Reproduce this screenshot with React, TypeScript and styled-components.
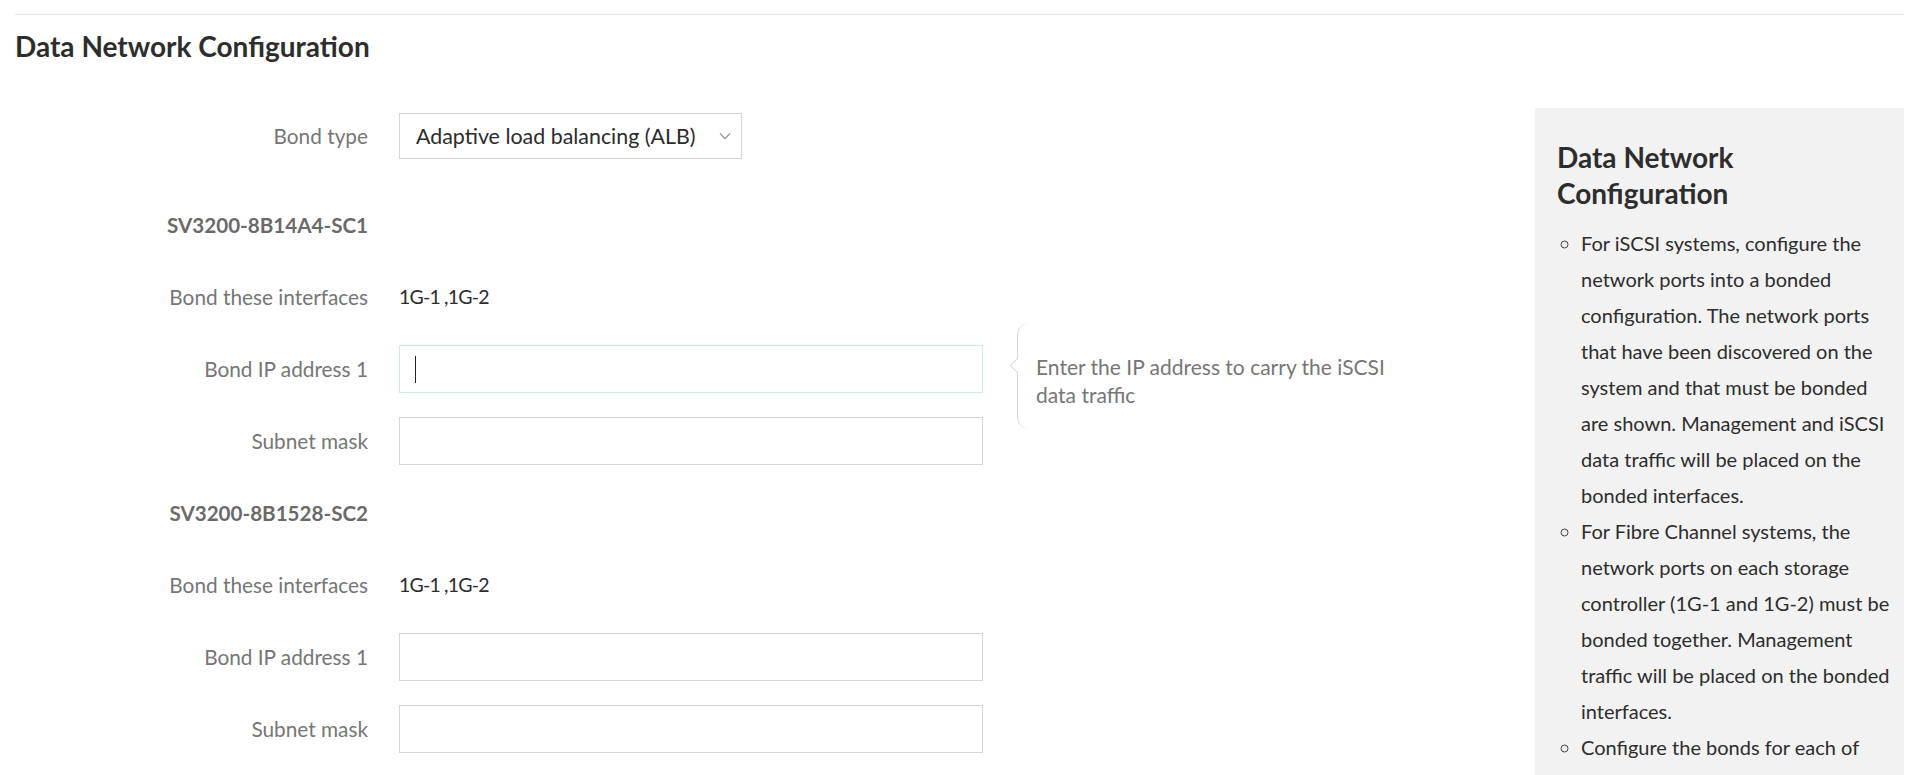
import React from "react";
import styled, { createGlobalStyle } from "styled-components";

const Global = createGlobalStyle`
  html, body { margin: 0; padding: 0; background: #ffffff; }
  body { font-family: Lato, "Noto Sans", Arial, sans-serif; color: #333333; overflow: hidden; }
  * { box-sizing: border-box; }
`;

const Page = styled.div`
  width: 1907px;
  height: 775px;
  padding: 14px 3px 0 15px;
  overflow: hidden;
`;

const Rule = styled.hr`
  margin: 0;
  border: 0;
  border-top: 1px solid #e4e4e4;
`;

const Title = styled.h2`
  margin: 14px 0 0;
  font-size: 28px;
  line-height: 34px;
  font-weight: 700;
  color: #2d2d2d;
`;

const Body = styled.div`
  display: flex;
  align-items: flex-start;
  margin-top: 45px;
`;

const Form = styled.div`
  flex: 1;
  display: grid;
  grid-template-columns: 353px 584px 1fr;
  column-gap: 31px;
  row-gap: 24px;
  padding-top: 4px;
  align-items: center;
`;

const Label = styled.div<{ $strong?: boolean }>`
  grid-column: 1;
  text-align: right;
  line-height: 48px;
  color: ${(p) => (p.$strong ? "#6a6a6a" : "#767676")};
  font-weight: ${(p) => (p.$strong ? 700 : 400)};
  font-size: ${(p) => (p.$strong ? "20.6px" : "20.8px")};
`;

const Value = styled.div`
  grid-column: 2;
  font-size: 19.5px;
  letter-spacing: -0.8px;
  line-height: 48px;
  color: #2b2b2b;
`;

const Spacer = styled.div`
  grid-column: 2 / span 2;
  height: 48px;
`;

const SelectBox = styled.div`
  grid-column: 2;
  justify-self: start;
  width: 343px;
  height: 46px;
  margin-bottom: 17px;
  border: 1px solid #d4d4d4;
  display: flex;
  align-items: center;
  justify-content: space-between;
  padding: 0 10px 0 16px;
  font-size: 21.4px;
  color: #2b2b2b;
  background: #fff;
  white-space: nowrap;
`;

const SelectLabelCell = styled(Label)`
  margin-bottom: 17px;
`;

const FieldWrap = styled.div`
  grid-column: 2;
  position: relative;
  height: 48px;
`;

const TextInput = styled.input<{ $focused?: boolean }>`
  width: 100%;
  height: 100%;
  border: 1px solid ${(p) => (p.$focused ? "#c9eee5" : "#d4d4d4")};
  background: #fff;
  outline: none;
  padding: 0 16px;
  font-family: inherit;
  font-size: 18px;
  color: #2b2b2b;
`;

const Caret = styled.span`
  position: absolute;
  left: 16px;
  top: 11px;
  width: 1px;
  height: 27px;
  background: #222;
`;

const HelpCell = styled.div`
  grid-column: 3;
  align-self: center;
  position: relative;
  margin-left: 3px;
`;

const Bracket = styled.div`
  position: absolute;
  left: 0;
  top: -46px;
  width: 380px;
  height: 106px;
  border-left: 1px solid #d8d8d8;
  border-radius: 12px 0 0 12px;
  &::before {
    content: "";
    position: absolute;
    left: -6px;
    top: 37px;
    width: 10px;
    height: 10px;
    background: #fff;
    border-left: 1px solid #d8d8d8;
    border-bottom: 1px solid #d8d8d8;
    transform: rotate(45deg);
  }
`;

const HelpText = styled.div`
  position: absolute;
  left: 19px;
  top: -16px;
  width: 365px;
  font-size: 21px;
  line-height: 28px;
  color: #767676;
`;

const Aside = styled.aside`
  width: 369px;
  flex: none;
  background: #f2f2f2;
  padding: 31px 4px 40px 22px;
  height: 700px;
`;

const AsideTitle = styled.h3`
  margin: 0;
  font-size: 28px;
  line-height: 36px;
  font-weight: 700;
  color: #2d2d2d;
  padding-right: 16px;
`;

const List = styled.ul`
  margin: 14px 0 0;
  padding-left: 24px;
  list-style-type: circle;
`;

const Item = styled.li`
  font-size: 20px;
  line-height: 36px;
  color: #2d2d2d;
  white-space: nowrap;
  &::marker { color: #444; }
`;

const Chevron = () => (
  <svg width="12" height="8" viewBox="0 0 12 8" fill="none">
    <path d="M1 1.5 L6 6.5 L11 1.5" stroke="#9a9a9a" strokeWidth="1.3" />
  </svg>
);

type Controller = { name: string; focused?: boolean };

const controllers: Controller[] = [
  { name: "SV3200-8B14A4-SC1", focused: true },
  { name: "SV3200-8B1528-SC2" },
];

const helpItems: string[][] = [
  [
    "For iSCSI systems, configure the",
    "network ports into a bonded",
    "configuration. The network ports",
    "that have been discovered on the",
    "system and that must be bonded",
    "are shown. Management and iSCSI",
    "data traffic will be placed on the",
    "bonded interfaces.",
  ],
  [
    "For Fibre Channel systems, the",
    "network ports on each storage",
    "controller (1G-1 and 1G-2) must be",
    "bonded together. Management",
    "traffic will be placed on the bonded",
    "interfaces.",
  ],
  ["Configure the bonds for each of", "the storage controllers."],
];

export default function App() {
  return (
    <>
      <Global />
      <Page>
        <Rule />
        <Title>Data Network Configuration</Title>
        <Body>
          <Form>
            <SelectLabelCell>Bond type</SelectLabelCell>
            <SelectBox>
              <span>Adaptive load balancing (ALB)</span>
              <Chevron />
            </SelectBox>
            <div />
            {controllers.map((c) => (
              <React.Fragment key={c.name}>
                <Label $strong>{c.name}</Label>
                <Spacer />
                <Label>Bond these interfaces</Label>
                <Value>1G-1 ,1G-2</Value>
                <div />
                <Label>Bond IP address 1</Label>
                <FieldWrap>
                  <TextInput $focused={c.focused} />
                  {c.focused && <Caret />}
                </FieldWrap>
                {c.focused ? (
                  <HelpCell>
                    <Bracket />
                    <HelpText>
                      Enter the IP address to carry the iSCSI data traffic
                    </HelpText>
                  </HelpCell>
                ) : (
                  <div />
                )}
                <Label>Subnet mask</Label>
                <FieldWrap>
                  <TextInput />
                </FieldWrap>
                <div />
              </React.Fragment>
            ))}
          </Form>
          <Aside>
            <AsideTitle>Data Network Configuration</AsideTitle>
            <List>
              {helpItems.map((lines, i) => (
                <Item key={i}>
                  {lines.map((l, j) => (
                    <React.Fragment key={j}>
                      {j > 0 && <br />}
                      {l}
                    </React.Fragment>
                  ))}
                </Item>
              ))}
            </List>
          </Aside>
        </Body>
      </Page>
    </>
  );
}
